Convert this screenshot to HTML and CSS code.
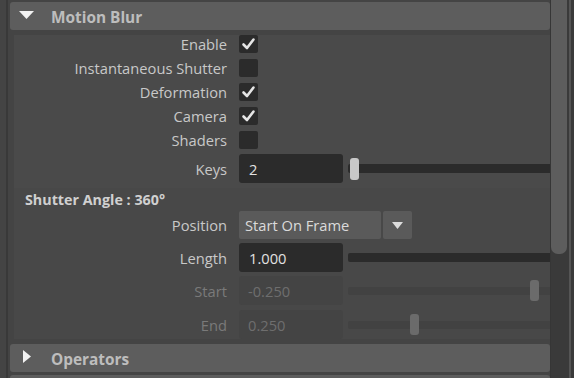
FILE: index.html
```html
<!DOCTYPE html>
<html>
<head>
<meta charset="utf-8">
<link rel="stylesheet" href="styles.css">
</head>
<body>
<div class="app">
  <div class="gutter"><div class="gutter-line"></div></div>
  <div class="panel">
    <div class="frame-header">
      <div class="tri-slot"><svg class="tri-down" width="15" height="8" viewBox="0 0 15 8"><polygon points="0,0 15,0 7.5,8" fill="#f2f2f2"/></svg></div>
      <span class="frame-title">Motion Blur</span>
    </div>
    <div class="frame-body">
      <div class="row check-row"><div class="lbl">Enable</div><div class="cb"><svg width="19" height="18" viewBox="0 0 19 18"><polyline points="4.5,9.5 8,13 14.5,4.5" fill="none" stroke="#e6e6e6" stroke-width="2.6" stroke-linejoin="round" stroke-linecap="round"/></svg></div></div>
      <div class="row check-row"><div class="lbl">Instantaneous Shutter</div><div class="cb"></div></div>
      <div class="row check-row"><div class="lbl">Deformation</div><div class="cb"><svg width="19" height="18" viewBox="0 0 19 18"><polyline points="4.5,9.5 8,13 14.5,4.5" fill="none" stroke="#e6e6e6" stroke-width="2.6" stroke-linejoin="round" stroke-linecap="round"/></svg></div></div>
      <div class="row check-row"><div class="lbl">Camera</div><div class="cb"><svg width="19" height="18" viewBox="0 0 19 18"><polyline points="4.5,9.5 8,13 14.5,4.5" fill="none" stroke="#e6e6e6" stroke-width="2.6" stroke-linejoin="round" stroke-linecap="round"/></svg></div></div>
      <div class="row check-row last"><div class="lbl">Shaders</div><div class="cb"></div></div>
      <div class="row field-row"><div class="lbl">Keys</div><div class="field">2</div><div class="slider"><div class="track"></div><div class="handle" style="left:2px"></div></div></div>
      <div class="subframe">
        <div class="subtitle">Shutter Angle : 360°</div>
        <div class="row dd-row"><div class="lbl">Position</div>
          <div class="dropdown"><div class="dd-main">Start On Frame</div><div class="dd-btn"><svg width="11" height="7" viewBox="0 0 11 7"><polygon points="0,0 11,0 5.5,7" fill="#dcdcdc"/></svg></div></div>
        </div>
        <div class="row field-row"><div class="lbl">Length</div><div class="field">1.000</div><div class="slider"><div class="track"></div></div></div>
        <div class="row field-row disabled"><div class="lbl">Start</div><div class="field">-0.250</div><div class="slider"><div class="track"></div><div class="handle" style="left:182px"></div></div></div>
        <div class="row field-row disabled endrow"><div class="lbl">End</div><div class="field">0.250</div><div class="slider"><div class="track"></div><div class="handle" style="left:62px"></div></div></div>
      </div>
    </div>
    <div class="frame-header">
      <div class="tri-slot"><svg class="tri-right" width="8" height="13" viewBox="0 0 8 13"><polygon points="0,0 8,6.5 0,13" fill="#f2f2f2"/></svg></div>
      <span class="frame-title">Operators</span>
    </div>
    <div class="frame-header stub"></div>
  </div>
  <div class="scroll">
    <div class="sb-edge"></div>
    <div class="sb-col"><div class="thumb"></div></div>
    <div class="sb-dark"></div>
    <div class="sb-light"></div>
    <div class="sb-dark2"></div>
  </div>
</div>
</body>
</html>
```
FILE: styles.css
```css
* { box-sizing: border-box; }
html, body { margin: 0; padding: 0; }
body {
  background: #444444;
  font-family: "Open Sans", "Noto Sans", sans-serif;
  font-size: 14.7px;
  color: #c8c8c8;
  overflow: hidden;
  width: 574px;
  height: 378px;
}
.app { display: flex; height: 378px; overflow: hidden; }
.gutter { width: 10px; flex: none; padding-left: 6px; }
.gutter-line { width: 2px; height: 100%; background: #393939; }
.panel { width: 540px; flex: none; padding-top: 2px; display: flex; flex-direction: column; }
.frame-header {
  height: 28px; flex: none;
  background: #5d5d5d;
  border-radius: 3px;
  display: flex; align-items: center;
}
.frame-header.stub { margin-top: 3px; border-radius: 3px 3px 0 0; }
.tri-slot { width: 41px; flex: none; height: 100%; position: relative; }
.tri-down { position: absolute; left: 9px; top: 9px; }
.tri-right { position: absolute; left: 13px; top: 6px; }
.frame-title { font-weight: 700; font-size: 15.4px; color: #bdbdbd; padding-top: 2px; }
.frame-body {
  margin: 5px 0 5px 4px;
  background: #4a4a4a;
  height: 304px;
  flex: none;
}
.row { display: flex; align-items: center; }
.check-row { height: 18px; margin-bottom: 6px; }
.check-row.last { margin-bottom: 5px; }
.lbl { width: 225px; flex: none; padding-right: 12px; text-align: right; white-space: nowrap; color: #c8c8c8; }
.cb { width: 19px; height: 18px; background: #2b2b2b; border-radius: 2px; display: flex; }
.field-row { height: 29px; margin-bottom: 5px; }
.field {
  width: 104px; height: 100%; flex: none;
  background: #2b2b2b; border-radius: 3px;
  padding-left: 10px;
  display: flex; align-items: center;
  color: #e2e2e2;
}
.slider { margin-left: 5px; flex: 1; height: 100%; position: relative; display: flex; align-items: center; }
.track { width: 100%; height: 9px; background: #2b2b2b; border-radius: 2px 0 0 2px; }
.handle { position: absolute; top: 4px; width: 9px; height: 22px; background: #c8c8c8; border-radius: 3px; }
.subframe { background: #484848; height: 151px; }
.subtitle { height: 23px; padding-left: 11px; display: flex; align-items: center; font-weight: 700; font-size: 14.3px; color: #d0d0d0; }
.dd-row { height: 28px; margin-bottom: 4px; }
.subframe .field-row { margin-bottom: 4px; }
.subframe .field-row.disabled { margin-bottom: 5px; }
.subframe .field-row.endrow { margin-bottom: 0; }
.dropdown { display: flex; gap: 2px; height: 100%; }
.dd-main { width: 142px; background: #5a5a5a; border-radius: 2px; padding-left: 6px; display: flex; align-items: center; color: #dadada; }
.dd-btn { width: 29px; background: #5a5a5a; border-radius: 2px; display: flex; align-items: center; justify-content: center; }
.disabled .lbl { color: #7a7a7a; }
.disabled .field { background: #444444; color: #6e6e6e; padding-left: 9px; }
.disabled .track { background: #424242; height: 8px; }
.disabled .handle { background: #6b6b6b; top: 4px; height: 21px; }
.scroll { width: 24px; flex: none; display: flex; background: #3a3a3a; }
.sb-edge { width: 1px; background: #363636; }
.sb-col { width: 16px; }
.thumb { width: 16px; height: 254px; background: #5d5d5d; border-radius: 0 0 7px 7px; }
.sb-dark { width: 2px; background: #3a3a3a; }
.sb-light { width: 2px; background: #555555; }
.sb-dark2 { flex: 1; background: #3a3a3a; }
```
